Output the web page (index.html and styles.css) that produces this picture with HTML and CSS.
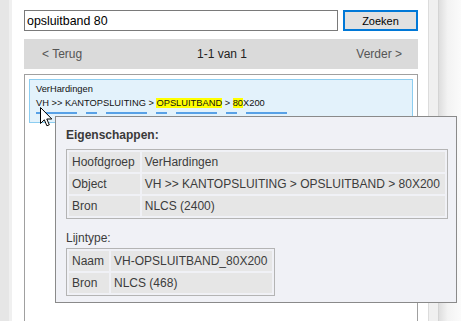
FILE: index.html
```html
<!DOCTYPE html>
<html>
<head>
    <title>Zoeken</title>
    <link rel="stylesheet" href="styles.css">
</head>
<body>
    <div class="page">
        <div class="leftbar"></div>

        <div class="main">
            <div class="search">
                <input class="search-input" type="text" value="opsluitband 80">
                <button class="search-button">Zoeken</button>
            </div>

            <div class="pager">
                <span class="pager-link">&lt; Terug</span>
                <span class="pager-count">1-1 van 1</span>
                <span class="pager-link pager-next">Verder &gt;</span>
            </div>

            <div class="results">
                <div class="result">
                    <div class="result-line">VerHardingen</div>
                    <div class="result-line">VH &gt;&gt; KANTOPSLUITING &gt; <mark>OPSLUITBAND</mark> &gt; <mark>80</mark>X200</div>
                    <svg class="linetype" width="260" height="4" viewBox="0 0 260 4">
                        <line x1="0" y1="2" x2="252" y2="2" stroke="#2b86e0" stroke-width="1.3" stroke-dasharray="41 9 11 9"/>
                    </svg>
                </div>
            </div>
        </div>

        <div class="scrollbar"></div>
        <div class="shade"></div>

        <!-- hover tooltip -->
        <div class="tooltip">
            <div class="tooltip-title">Eigenschappen:</div>
            <table class="props">
                <tr><td>Hoofdgroep</td><td>VerHardingen</td></tr>
                <tr><td>Object</td><td>VH &gt;&gt; KANTOPSLUITING &gt; OPSLUITBAND &gt; 80X200</td></tr>
                <tr><td>Bron</td><td>NLCS (2400)</td></tr>
            </table>
            <div class="tooltip-sub">Lijntype:</div>
            <table class="props">
                <tr><td>Naam</td><td>VH-OPSLUITBAND_80X200</td></tr>
                <tr><td>Bron</td><td>NLCS (468)</td></tr>
            </table>
        </div>

        <svg class="cursor" width="13" height="20" viewBox="0 0 13 20">
            <path d="M0.5 0.5 L0.5 16.5 L4.3 12.8 L6.9 18.8 L9.3 17.8 L6.8 12 L11.8 12 Z" fill="#fff" stroke="#000" stroke-width="1" stroke-linejoin="round"/>
        </svg>
    </div>
</body>
</html>
```

FILE: styles.css
```css
html, body {
    margin: 0;
    padding: 0;
    overflow: hidden;
}
body {
    font-family: "Liberation Sans", Arial, sans-serif;
    font-size: 12px;
    background: #fff;
}
.page {
    position: relative;
    display: flex;
    height: 321px;
}
.leftbar {
    width: 9px;
    background: #e6e6e6;
    border-right: 3px solid #f0f0f0;
}
.main {
    width: 394px;
    padding: 10px 10px 0 12px;
    display: flex;
    flex-direction: column;
    background: #fff;
}
.search {
    display: flex;
    gap: 5px;
    height: 21px;
}
.search-input {
    box-sizing: border-box;
    width: 314px;
    height: 21px;
    margin: 0;
    padding: 0 2px;
    border: 1px solid #7a7a7a;
    font-family: "Liberation Sans", Arial, sans-serif;
    font-size: 12.4px;
    color: #000;
    outline: none;
}
.search-button {
    box-sizing: border-box;
    width: 75px;
    height: 21px;
    margin: 0;
    padding: 0;
    border: 2px solid #0078d7;
    background: #e1e1e1;
    font-family: "Liberation Sans", Arial, sans-serif;
    font-size: 11px;
    color: #000;
}
.pager {
    margin-top: 8px;
    height: 30px;
    background: #dadada;
    display: grid;
    grid-template-columns: 1fr auto 1fr;
    align-items: center;
    padding: 0 16px 0 18px;
}
.pager-link {
    color: #555;
}
.pager-next {
    text-align: right;
}
.pager-count {
    color: #222;
}
.results {
    flex: 1;
    margin-top: 5px;
    border: 1px solid #a0a0a0;
    border-bottom: none;
    padding: 4px;
}
.result {
    height: 42px;
    padding: 2px 6px 0 6px;
    box-sizing: border-box;
    height: 44px;
    background: #e3f2fb;
    border: 1px solid #8ccdf0;
    font-size: 9.3px;
    color: #111;
}
.result-line {
    height: 14px;
    line-height: 14px;
    white-space: nowrap;
}
.result mark {
    background: #ffff00;
    color: #111;
}
.linetype {
    display: block;
    margin-top: 1px;
}
.scrollbar {
    width: 9px;
    background: #f0f0f0;
    border-left: 1px solid #dcdcdc;
    border-right: 1px solid #d4d4d4;
}
.shade {
    flex: 1;
    background: linear-gradient(to right, #dedede, #f3f3f3 40%, #fbfbfb);
}
.tooltip {
    position: absolute;
    left: 55px;
    top: 116px;
    width: 380px;
    height: 175px;
    padding: 10px 10px 0 10px;
    background: #f0f1f6;
    border: 1px solid #8a8a8a;
    color: #3c3c3c;
}
.tooltip-title {
    font-weight: bold;
    line-height: 16px;
    color: #3a3a3a;
}
.props {
    margin-top: 6px;
    border: 1px solid #b4b4b4;
    border-spacing: 2px;
    background: #f0f1f6;
}
.props td {
    height: 20px;
    padding: 0 5px 0 3px;
    background: #e6e6e6;
    white-space: nowrap;
    color: #3c3c3c;
}
.tooltip-sub {
    margin-top: 12px;
    line-height: 14px;
}
.tooltip-sub + .props {
    margin-top: 3px;
}
.cursor {
    position: absolute;
    left: 40px;
    top: 107px;
}
```
